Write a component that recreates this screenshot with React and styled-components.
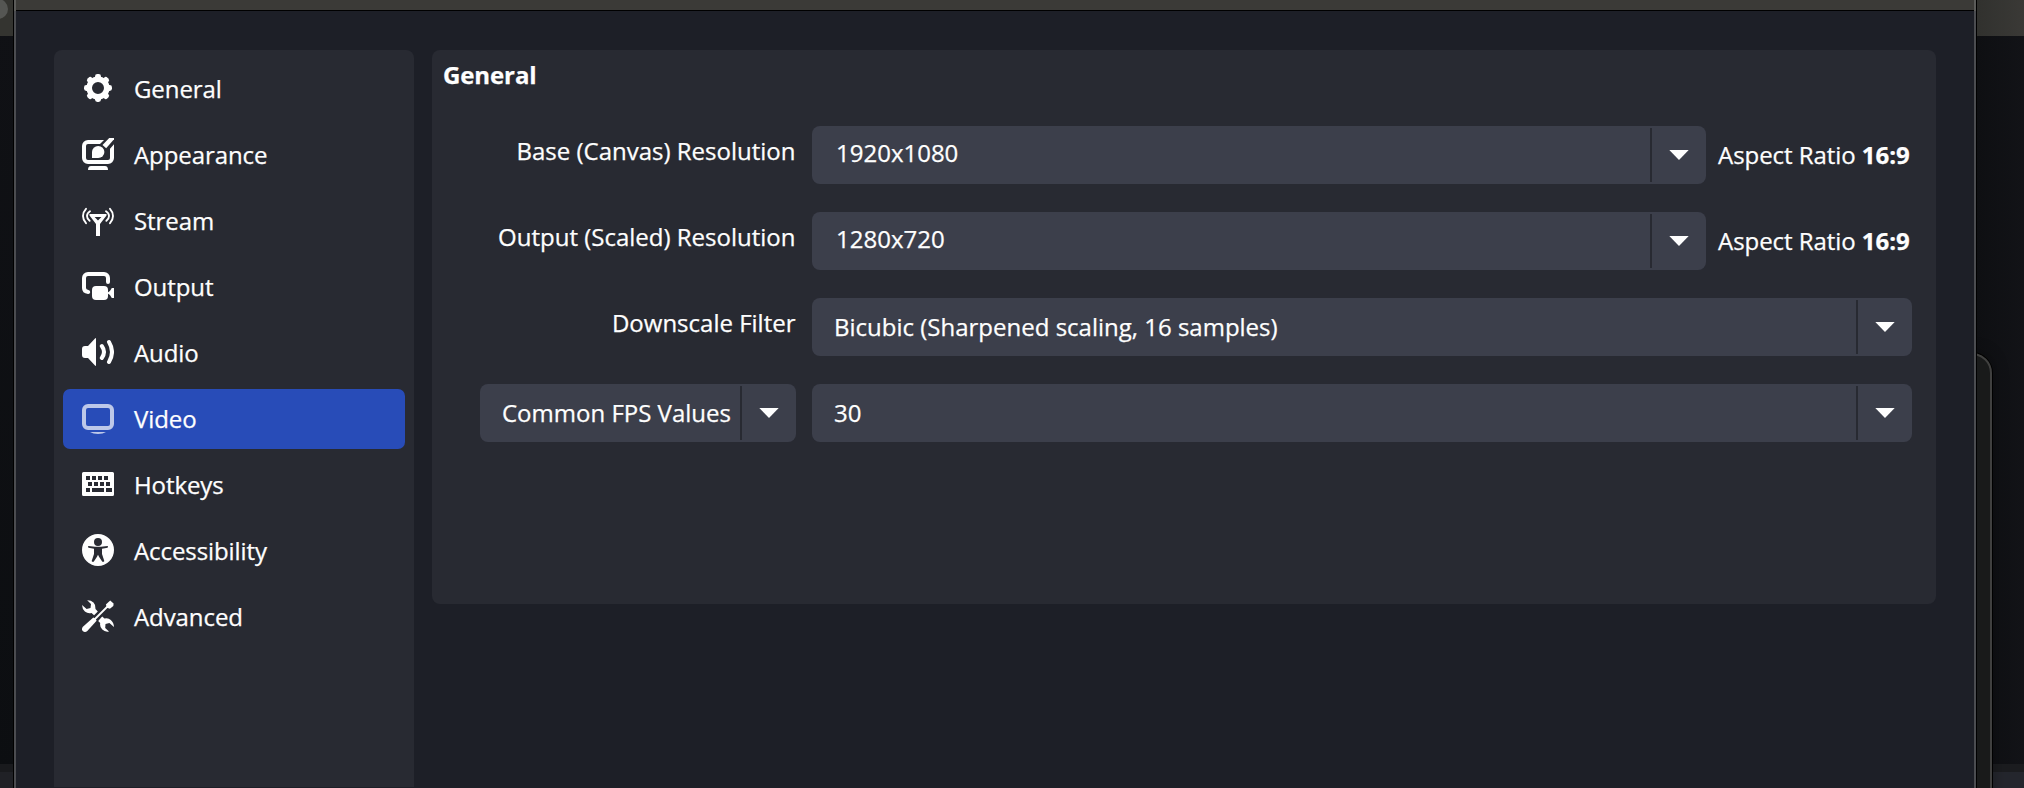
import React from "react";
import styled, { createGlobalStyle } from "styled-components";

const GlobalStyle = createGlobalStyle`
  *, *::before, *::after { box-sizing: border-box; }
  body {
    margin: 0;
    overflow: hidden;
    background: #111216;
    color: #fefefe;
    font-family: "Open Sans", "Noto Sans", sans-serif;
    font-size: 24px;
    -webkit-text-stroke: 0.25px currentColor;
  }
`;

const Desktop = styled.div`
  display: flex;
  width: 2024px;
  height: 788px;
  overflow: hidden;
  background: #111216;
`;

const Backdrop = styled.div`
  position: relative;
  display: flex;
  flex-direction: column;
  width: ${(p) => p.$width}px;
  background: ${(p) => p.$shade};
  overflow: hidden;
`;

const BackdropTitle = styled.div`
  flex: none;
  height: 36px;
  background: ${(p) => p.$fill};
`;

const Knob = styled.div`
  width: 20px;
  height: 20px;
  margin: -1px 0 0 -12px;
  border-radius: 50%;
  background: #555653;
`;

const BackdropFooter = styled.div`
  flex: none;
  height: 24px;
  margin-top: auto;
  border-top: 8px solid ${(p) => p.$line};
  background: ${(p) => p.$fill};
`;

const SideWindow = styled.div`
  position: absolute;
  right: 32px;
  top: 353px;
  width: 92px;
  height: 460px;
  border: 2px solid #40403f;
  border-radius: 20px;
  background: #191a1a;
  box-shadow: 0 0 0 1px #000, 0 0 16px rgba(0, 0, 0, 0.35);
`;

const Window = styled.main`
  display: flex;
  flex-direction: column;
  width: 1964px;
  border: solid #000;
  border-width: 0 1px;
`;

const TitleBar = styled.div`
  flex: none;
  height: 11px;
  border: solid #5b5b59;
  border-width: 0 2px;
  background: linear-gradient(#3b3a37 10px, #000 10px);
`;

const WindowBody = styled.div`
  flex: 1;
  display: flex;
  align-items: flex-start;
  gap: 18px;
  padding: 39px 38px 0;
  border: solid #4b4c50;
  border-width: 0 2px;
  background: #1d1f27;
`;

const Sidebar = styled.nav`
  display: flex;
  flex-direction: column;
  gap: 6px;
  width: 360px;
  height: 737px;
  padding: 9px;
  border-radius: 8px 8px 0 0;
  background: #282a32;
`;

const NavItem = styled.button`
  display: flex;
  align-items: center;
  gap: 20px;
  height: 60px;
  padding: 0 19px 2px;
  border: 0;
  border-radius: 7px;
  background: ${(p) => (p.$active ? "#284cb8" : "transparent")};
  color: inherit;
  font: inherit;
  line-height: 58px;
  letter-spacing: -0.08px;
  text-align: left;
  svg {
    flex: none;
    color: ${(p) => (p.$active ? "#bdc8e9" : "#fefefe")};
  }
`;

const NavLabel = styled.span`
  padding-top: 1px;
`;

const Panel = styled.section`
  width: 1504px;
  height: 554px;
  padding: 8px 24px 0 11px;
  border-radius: 8px;
  background: #282a32;
`;

const PanelTitle = styled.h2`
  margin: 0;
  height: 68px;
  font-size: 24px;
  font-weight: 700;
  line-height: 34px;
  letter-spacing: -0.1px;
`;

const Form = styled.div`
  display: grid;
  grid-template-columns: 316px 1fr;
  gap: 28px 16px;
  padding-left: 37px;
`;

const Label = styled.label`
  justify-self: end;
  height: 58px;
  padding-right: 0.5px;
  line-height: 50px;
  white-space: nowrap;
`;

const Field = styled.div`
  display: flex;
  gap: 12px;
`;

const Combo = styled.div`
  flex: 1;
  display: flex;
  align-items: center;
  height: 58px;
  border-radius: 8px;
  background: #3c3f4b;
`;

const ComboValue = styled.span`
  flex: 1;
  padding: ${(p) => (p.$editable ? "0 0 5px 24px" : "0 0 1px 22px")};
  line-height: 56px;
  white-space: nowrap;
`;

const DropButton = styled.span`
  flex: none;
  display: flex;
  align-items: center;
  justify-content: center;
  width: 56px;
  height: 54px;
  border-left: 2px solid #282a32;
`;

const Ratio = styled.span`
  width: 194px;
  line-height: 57px;
  letter-spacing: -0.05px;
  white-space: nowrap;
`;

function Dropdown({ value, editable }) {
  return (
    <Combo>
      <ComboValue $editable={editable}>{value}</ComboValue>
      <DropButton>
        <svg width="20" height="10" viewBox="0 0 20 10" fill="#fefefe">
          <path d="M.3 0h19.4L10 10z" />
        </svg>
      </DropButton>
    </Combo>
  );
}

function Icon({ children }) {
  return (
    <svg width="32" height="32" viewBox="0 0 32 32" fill="currentColor">
      {children}
    </svg>
  );
}

const line = (width, cap = "round") => ({
  fill: "none",
  stroke: "currentColor",
  strokeWidth: width,
  strokeLinecap: cap,
});

const GearIcon = () => (
  <Icon>
    <circle cx="16" cy="16" r="8.8" {...line(5.6)} />
    {[0, 45, 90, 135, 180, 225, 270, 315].map((a) => (
      <rect key={a} x="13" y="2" width="6" height="6" rx="2.4" transform={`rotate(${a} 16 16)`} />
    ))}
  </Icon>
);

const AppearanceIcon = () => (
  <Icon>
    <path d="M22 2H6a6 6 0 0 0-6 6v12a6 6 0 0 0 6 6h20a6 6 0 0 0 6-6V6.200l-4 4.600V20a2 2 0 0 1-2 2H6a2 2 0 0 1-2-2V8a2 2 0 0 1 2-2h12z" />
    <path d="M27.200 0H32v1.200L24.200 10.200 20.500 7z" />
    <path d="M10 20v-6a6.200 6 0 1 1 6.200 6z" />
    <path d="M9 28h14q3 0 3 4H6q0-4 3-4z" />
  </Icon>
);

const StreamIcon = () => (
  <Icon>
    <path fillRule="evenodd" d="M7.500 10h17v1.500L18 20v12h-4V20L7.500 11.500zM12.600 13l3.400 3.600L19.400 13z" />
    <path d="M4 4.800Q1 8 1 12t3 7.200M8 7.200Q5 9.200 5 12t2.600 4.800M28 4.800Q31 8 31 12t-3 7.200M24 7.200Q27 9.200 27 12t-2.600 4.800" {...line(1.9)} />
  </Icon>
);

const OutputIcon = () => (
  <Icon>
    <path d="M26 12V8a4 4 0 0 0-4-4H6a4 4 0 0 0-4 4v10q0 3.500 4.200 4" {...line(4)} />
    <rect x="10" y="16" width="16" height="14" rx="4" />
    <path d="M25 23q3.500-1.500 4.800-5H32v10h-2.200Q28.500 24.500 25 23z" />
  </Icon>
);

const AudioIcon = () => (
  <Icon>
    <path d="M3 10h3l7-7.500q1-.8 1 0v27q0 .8-1 0L6 22H3q-3 0-3-3v-6q0-3 3-3z" />
    <path d="M19.800 10q4.400 6 0 12M27 6q6 10 0 20" {...line(4)} />
  </Icon>
);

const VideoIcon = () => (
  <Icon>
    <rect x="2" y="4" width="28" height="22" rx="4" {...line(4)} />
    <path d="M8 30h16q-3 2-8 2t-8-2z" />
  </Icon>
);

const HotkeysIcon = () => (
  <Icon>
    <path
      fillRule="evenodd"
      d="M1.500 4h29Q32 4 32 5.500v21q0 1.500-1.500 1.500h-29Q0 28 0 26.500v-21Q0 4 1.500 4zM4 8v4h4V8zm6 0v4h4V8zm6 0v4h4V8zm6 0v4h4V8zM6 14v4h4v-4zm6 0v4h4v-4zm6 0v4h4v-4zm6 0v4h4v-4zM4 20v4h4v-4zm6 0v4h12v-4zm14 0v4h6v-4z"
    />
  </Icon>
);

const AccessibilityIcon = () => (
  <Icon>
    <path
      fillRule="evenodd"
      d="M16 0a16 16 0 1 1 0 32 16 16 0 0 1 0-32zm0 4a4 4 0 1 0 0 8 4 4 0 0 0 0-8zM6.500 12.100q-1.200.7 0 1.700L12 14.700v5.300l-2.300 6.900q.3 1.300 2 .8L15 22.800l1-2 1 2 3.300 4.900q1.700.5 2-.8L20 20v-5.300l5.500-.9q1.200-1 0-1.700L19 12.800h-6z"
    />
  </Icon>
);

const AdvancedIcon = () => (
  <Icon>
    <path d="M5.200.2Q9 .1 11.500 2.600q2.600 2.700 2 6.500l2.300 2.300-3.700 3.800-2.600-2.300q-3.600 1-6.600-1.500Q.2 8.900 0 5l4.600 3.900 3.900-1 .5-4z" />
    <path d="M20.200 16.600l2.300 2q3.600-1 6.300 1.300Q31.800 22.500 32 27l-4.600-4-3.900 1-.3 3.900L27 31.500Q23 32.300 20.300 29.600 17.500 27 18.200 23l-2-2 1.500-1.800z" />
    <path d="M12.500 19.500L27 5" {...line(1.8, "butt")} />
    <path d="M28.200.4l3.400 3.100-.3 2.500-3.400 2.800L25 7.800 23.900 4.600z" />
    <path d="M11.300 17.400q2.800.8 3.300 3.300L5.300 31q-2.300 1.900-4.300.2-2-2-.1-4.500z" />
  </Icon>
);

const NAV = [
  ["General", GearIcon],
  ["Appearance", AppearanceIcon],
  ["Stream", StreamIcon],
  ["Output", OutputIcon],
  ["Audio", AudioIcon],
  ["Video", VideoIcon],
  ["Hotkeys", HotkeysIcon],
  ["Accessibility", AccessibilityIcon],
  ["Advanced", AdvancedIcon],
];

export default function App() {
  return (
    <Desktop>
      <GlobalStyle />
      <Backdrop $width={13} $shade="linear-gradient(#101115, #0c0e11)">
        <BackdropTitle $fill="#343430">
          <Knob />
        </BackdropTitle>
        <BackdropFooter $line="#191a1d" $fill="#202126" />
      </Backdrop>
      <Window>
        <TitleBar />
        <WindowBody>
          <Sidebar>
            {NAV.map(([name, Glyph]) => (
              <NavItem key={name} $active={name === "Video"}>
                <Glyph />
                <NavLabel>{name}</NavLabel>
              </NavItem>
            ))}
          </Sidebar>
          <Panel>
            <PanelTitle>General</PanelTitle>
            <Form>
              <Label>Base (Canvas) Resolution</Label>
              <Field>
                <Dropdown value="1920x1080" editable />
                <Ratio>Aspect Ratio <b>16:9</b></Ratio>
              </Field>
              <Label>Output (Scaled) Resolution</Label>
              <Field>
                <Dropdown value="1280x720" editable />
                <Ratio>Aspect Ratio <b>16:9</b></Ratio>
              </Field>
              <Label>Downscale Filter</Label>
              <Field>
                <Dropdown value="Bicubic (Sharpened scaling, 16 samples)" />
              </Field>
              <Dropdown value="Common FPS Values" />
              <Dropdown value="30" />
            </Form>
          </Panel>
        </WindowBody>
      </Window>
      <Backdrop $width={47} $shade="linear-gradient(90deg, #0e0f12, #121317)">
        <BackdropTitle $fill="linear-gradient(90deg, #31312e, #3a3936)" />
        <BackdropFooter $line="#1b1c1f" $fill="#24262d" />
        <SideWindow />
      </Backdrop>
    </Desktop>
  );
}
